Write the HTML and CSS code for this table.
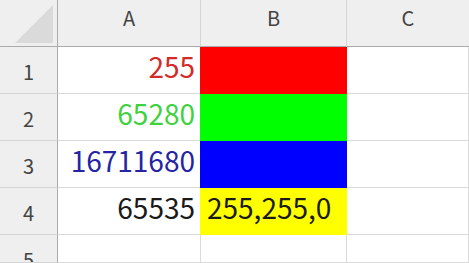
FILE: index.html
```html
<!DOCTYPE html>
<html lang="ja">
<head>
<meta charset="utf-8">
<title>Sheet</title>
<link rel="stylesheet" href="styles.css">
</head>
<body>
<div class="sheet">
  <div class="corner"><span class="tri"></span></div>
  <div class="colhead">A</div>
  <div class="colhead">B</div>
  <div class="colhead last">C</div>

  <div class="rowhead">1</div>
  <div class="cell num red-text">255</div>
  <div class="cell fill fill-red"></div>
  <div class="cell"></div>

  <div class="rowhead">2</div>
  <div class="cell num green-text">65280</div>
  <div class="cell fill fill-green"></div>
  <div class="cell"></div>

  <div class="rowhead">3</div>
  <div class="cell num blue-text">16711680</div>
  <div class="cell fill fill-blue"></div>
  <div class="cell"></div>

  <div class="rowhead">4</div>
  <div class="cell num">65535</div>
  <div class="cell fill fill-yellow">255,255,0</div>
  <div class="cell"></div>

  <div class="rowhead">5</div>
  <div class="cell"></div>
  <div class="cell"></div>
  <div class="cell"></div>
</div>
</body>
</html>
```
FILE: styles.css
```css
html, body {
  margin: 0;
  padding: 0;
  background: #ffffff;
  overflow: hidden;
}

.sheet {
  display: grid;
  grid-template-columns: 58px 143px 146px 122px;
  grid-template-rows: repeat(5, 47px) 28px;
  width: 469px;
  height: 263px;
  overflow: hidden;
  font-family: "Noto Sans CJK JP", "Noto Sans", sans-serif;
}

.corner {
  position: relative;
  background: #efefef;
  border-right: 1px solid #ababab;
  border-bottom: 1px solid #ababab;
}

.tri {
  position: absolute;
  left: 15px;
  top: 5px;
  width: 0;
  height: 0;
  border-left: 38px solid transparent;
  border-bottom: 38px solid #dadada;
}

.colhead {
  background: #efefef;
  border-right: 1px solid #d4d4d4;
  border-bottom: 1px solid #ababab;
  color: #444444;
  font-size: 20px;
  line-height: 36px;
  text-align: center;
}

.colhead.last {
  border-right: none;
}

.rowhead {
  background: #efefef;
  border-right: 1px solid #ababab;
  border-bottom: 1px solid #d4d4d4;
  color: #444444;
  font-size: 20px;
  line-height: 50px;
  text-align: center;
  overflow: hidden;
}

.cell {
  border-right: 1px solid #dadada;
  border-bottom: 1px solid #dadada;
  font-size: 28px;
  line-height: 39px;
  color: #1a1a1a;
  white-space: nowrap;
  overflow: visible;
}

.num {
  text-align: right;
  padding-right: 5px;
}

.red-text { color: #d42a2a; }
.green-text { color: #3fd23f; }
.blue-text { color: #2424a4; }

.fill {
  padding-left: 6px;
}

.fill-red {
  background: #ff0000;
  border-color: #ff0000;
  box-shadow: -1px 0 0 #ff0000;
}

.fill-green {
  background: #00ff00;
  border-color: #00ff00;
  box-shadow: -1px 0 0 #00ff00;
}

.fill-blue {
  background: #0000ff;
  border-color: #0000ff;
  box-shadow: -1px 0 0 #0000ff;
}

.fill-yellow {
  background: #ffff00;
  border-color: #ffff00;
  box-shadow: -1px 0 0 #ffff00;
  color: #1a1a1a;
}
```
